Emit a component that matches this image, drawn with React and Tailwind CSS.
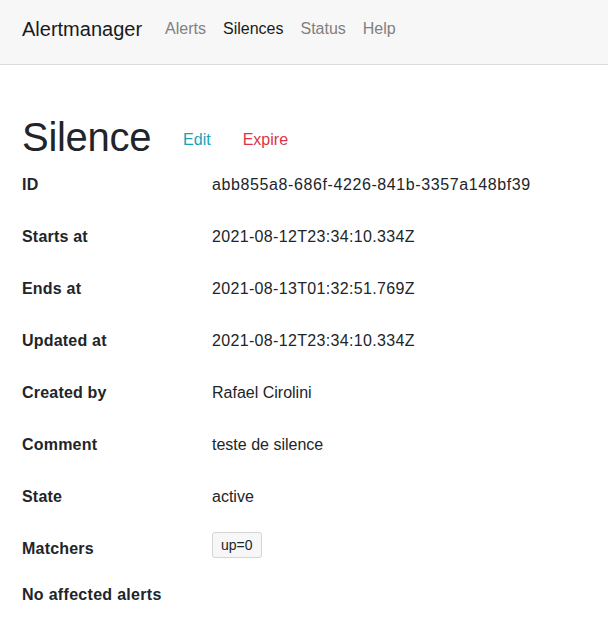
const rows = [
  ["ID", "abb855a8-686f-4226-841b-3357a148bf39", "tracking-[0.6px]"],
  ["Starts at", "2021-08-12T23:34:10.334Z", "tracking-[0.33px]"],
  ["Ends at", "2021-08-13T01:32:51.769Z", "tracking-[0.33px]"],
  ["Updated at", "2021-08-12T23:34:10.334Z", "tracking-[0.33px]"],
  ["Created by", "Rafael Cirolini", ""],
  ["Comment", "teste de silence", ""],
  ["State", "active", ""],
];

export default function App() {
  return (
    <div
      className="min-h-[628px] bg-white text-[#212529]"
      style={{ fontFamily: '"Liberation Sans", Arial, sans-serif' }}
    >
      <nav className="h-[65px] bg-[#f7f7f7] border-b border-[#dcdcdc] px-[22px] pt-[15px]">
        <div className="flex items-center gap-[23px]">
          <span className="text-[20px] leading-[28px] text-[#1a1a1a]">Alertmanager</span>
          <div className="flex items-center gap-[17px] text-[16px] leading-[28px]">
            <span className="text-[#808080]">Alerts</span>
            <span className="text-[#1a1a1a]">Silences</span>
            <span className="text-[#808080]">Status</span>
            <span className="text-[#808080]">Help</span>
          </div>
        </div>
      </nav>

      <main className="px-[22px] pt-[48px]">
        <div className="flex items-center gap-[32px]">
          <h1 className="text-[40px] leading-[48px] font-medium tracking-[-0.3px]">Silence</h1>
          <div className="flex gap-[32px] text-[16px] pt-[5px]">
            <span className="text-[#17a2b8]">Edit</span>
            <span className="text-[#dc3545]">Expire</span>
          </div>
        </div>

        <div className="mt-[12px]">
          {rows.map(([k, v, t]) => (
            <div key={k} className="flex h-[52px] text-[16px] leading-[24px]">
              <div className="w-[190px] font-bold tracking-[0.2px]">{k}</div>
              <div className={t}>{v}</div>
            </div>
          ))}
          <div className="flex h-[46px] text-[16px] leading-[24px]">
            <div className="w-[190px] font-bold tracking-[0.2px]">Matchers</div>
            <div className="-mt-[5px]">
              <span className="inline-block px-[8px] h-[26px] leading-[24px] text-[14px] bg-[#f7f7f7] border border-[#d4d4d4] rounded-[3px]">
                up=0
              </span>
            </div>
          </div>
          <div className="text-[16px] leading-[24px] font-bold tracking-[0.3px]">No affected alerts</div>
        </div>
      </main>
    </div>
  );
}
